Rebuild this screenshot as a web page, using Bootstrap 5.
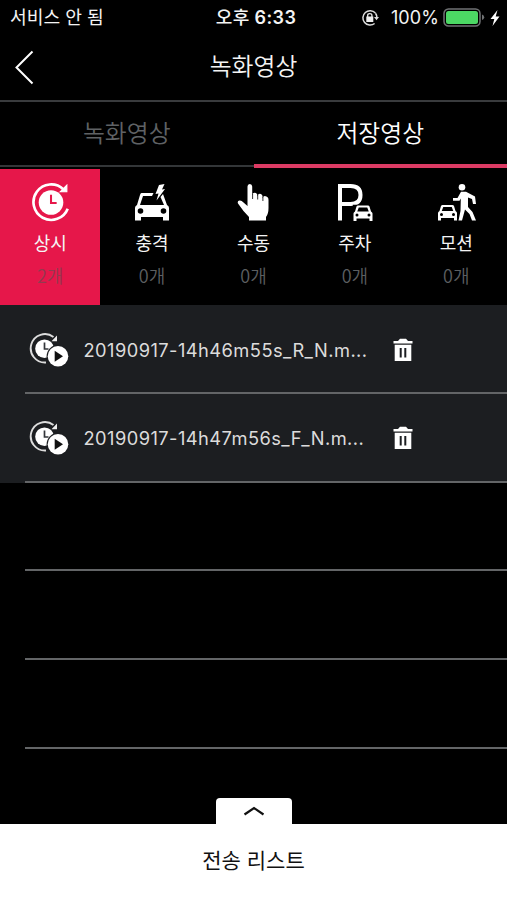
<!DOCTYPE html>
<html lang="ko">
<head>
<meta charset="utf-8">
<meta name="viewport" content="width=device-width, initial-scale=1">
<title>녹화영상</title>
<link href="https://cdn.jsdelivr.net/npm/bootstrap@5.3.0/dist/css/bootstrap.min.css" rel="stylesheet">
<style>
body{background:#000;color:#f4f4f4;font-family:"Inter","Noto Sans CJK KR",sans-serif;height:900px;overflow:hidden}
svg{display:block;flex:none}
.ko{font-family:"Noto Sans CJK KR",sans-serif}
.status-line{height:34px;font-size:18.3px;line-height:34px;padding:0 7px 0 10px;display:grid;grid-template-columns:1fr auto 1fr}
.status-line>div{padding-top:1px}
.carrier{font-size:18.2px;line-height:33px}
.clock-text{font-size:18px;font-weight:600;letter-spacing:.4px;line-height:33px;padding-left:2px}
.clock-text .ko{font-weight:500}
.pct{font-size:18px;letter-spacing:.1px}
.title-bar{height:68px;border-bottom:2px solid #393b3d;display:grid;grid-template-columns:60px 1fr 60px;padding-bottom:1px}
.title-bar h1,.tab-link{font-size:23.8px;font-weight:350;line-height:1}
.title-bar h1{padding-bottom:3px}
.tabs{height:66px}
.tab-link{color:#5f6265;border-bottom:2px solid #333638;padding-bottom:3px;height:65px}
.tab-link.on{color:#fff;border-bottom:4px solid #dc3b64;height:66px;padding-bottom:2px}
.cats{height:136.300px;margin-top:1px;display:grid;grid-template-columns:repeat(5,101.4px)}
.cat{padding-top:12px}
.cat.on{background:#e6174a;margin-right:1px}
.cat-name{font-size:18px;line-height:20px;margin-top:9px}
.cat-count{font-size:18px;line-height:20px;margin-top:13px;color:#5c5f61;font-weight:350}
.cat-count.on{color:#94394f}
.file-row{height:88.7px;position:relative;padding-left:27px}
.file-row.filled{background:#1c1e21}
.file-row::after{content:"";position:absolute;left:25px;right:0;bottom:0;height:2px;background:#636567}
.file-name{font-size:18.3px;line-height:24px;color:#dcdcdc;width:293px;margin-left:14.5px;letter-spacing:.44px;white-space:nowrap}
.sheet{height:76px;background:#fff;color:#111;font-size:21px;position:relative;padding-bottom:4px}
.handle{position:absolute;left:216px;top:-26px;width:76px;height:27px;background:#fff;border-radius:4px 4px 0 0}
</style>
<script src="https://cdn.jsdelivr.net/npm/bootstrap@5.3.0/dist/js/bootstrap.bundle.min.js"></script>
</head>
<body class="d-flex flex-column">
<svg width="0" height="0" class="position-absolute" aria-hidden="true">
<defs>
<symbol id="timer" viewBox="0 0 40 40">
<path d="M32.500 7.500A17.300 17.300 0 1 0 36.800 26.500" fill="none" stroke="#fff" stroke-width="2.600"/>
<path d="M36 3.500V10H29.500Z" fill="#fff" stroke="#fff" stroke-width="1"/>
<circle cx="20.500" cy="20.500" r="12" fill="#fff"/>
</symbol>
<symbol id="car" viewBox="0 0 40 34">
<path fill="#fff" fill-rule="evenodd" d="M10 2H30Q32 2 33 4L36 14Q39 16 39 18V33H33V28H7V33H1V18Q1 16 4 14L7 4Q8 2 10 2ZM11.500 6L8.500 14H31.500L28.500 6ZM8 18A3 3 0 1 0 8 24A3 3 0 1 0 8 18ZM32 18A3 3 0 1 0 32 24A3 3 0 1 0 32 18Z"/>
</symbol>
<symbol id="play" viewBox="0 0 42 36">
<path d="M26.500 5A14.200 14.200 0 1 0 19 30.500" fill="none" stroke="#ddd" stroke-width="1.900"/>
<path d="M30 3.500V9.200H24.500Z" fill="#eee"/>
<circle cx="17.500" cy="16.700" r="9.300" fill="#fff"/>
<path d="M17.500 10.500V17H21.500" fill="none" stroke="#33363a" stroke-width="1.700"/>
<circle cx="31" cy="24.200" r="11.400" fill="#1c1e21"/>
<circle cx="31" cy="24.200" r="10.300" fill="#fff"/>
<path d="M27.700 18.700V29.700L36 24.200Z" fill="#111"/>
</symbol>
<symbol id="trash" viewBox="0 0 20 24">
<path fill="#fff" fill-rule="evenodd" d="M.5 3H5L7 .8H13L15 3H19.500V5.500H.5ZM1.700 6.700H18.300V23H1.700ZM6.700 10V19.500H8.700V10ZM11.300 10V19.500H13.300V10Z"/>
</symbol>
</defs>
</svg>

<div class="status-line">
  <span class="ko carrier">서비스 안 됨</span>
  <span class="clock-text"><span class="ko">오후</span> 6:33</span>
  <div class="d-flex align-items-center justify-content-end">
    <svg class="me-2" width="18" height="18" viewBox="0 0 18 18"><path d="M14.400 4A7.200 7.200 0 1 0 13.600 14.500M14.500 4.200Q15.800 6 15.800 8" fill="none" stroke="#ddd" stroke-width="1.500"/><path d="M13 8H18L15.500 11.200Z" fill="#ddd"/><rect x="5.300" y="7.500" width="7" height="5.500" fill="#eee"/><path d="M6.700 8.500V6.300Q6.700 4.600 8.800 4.600T10.900 6.300V8.500" fill="none" stroke="#eee" stroke-width="1.300"/></svg>
    <span class="pct ms-1 me-1">100%</span>
    <svg width="43" height="20" viewBox="0 0 43 20"><rect x="1" y="1" width="36" height="17" rx="4.500" fill="none" stroke="#707274" stroke-width="1.500"/><rect x="3" y="3" width="32" height="13" rx="2.500" fill="#4cd864"/><path d="M39 6.500Q41.200 7.100 41.200 9.300T39 12.100Z" fill="#707274"/></svg>
    <svg class="ms-1" width="10" height="18" viewBox="0 0 10 18"><path d="M7.500 1L.5 10H4.300L2.500 17L9.500 7.500H5.700Z" fill="#fff"/></svg>
  </div>
</div>

<header class="title-bar align-items-center">
  <svg width="60" height="36" viewBox="0 0 60 36"><path d="M32.500 2.500L16.500 18.500L32.500 34.500" fill="none" stroke="#fff" stroke-width="2"/></svg>
  <h1 class="ko m-0 text-center">녹화영상</h1>
</header>

<nav class="tabs d-flex ko">
  <div class="tab-link w-50 d-flex align-items-center justify-content-center">녹화영상</div>
  <div class="tab-link on w-50 d-flex align-items-center justify-content-center">저장영상</div>
</nav>

<section class="cats ko text-center">
  <div class="cat on d-flex flex-column align-items-center">
    <svg width="41" height="42" viewBox="0 0 40 40"><use href="#timer"/><path d="M20.500 13V21H26" fill="none" stroke="#e6174a" stroke-width="2"/></svg>
    <div class="cat-name">상시</div><div class="cat-count on">2개</div>
  </div>
  <div class="cat d-flex flex-column align-items-center">
    <svg width="40" height="42" viewBox="0 0 40 42"><path fill="#fff" fill-rule="evenodd" d="M9.500 12H21.500L20 15H11L8 24H32L28.500 16L31 13L35 24Q37 25 37 27V39.500H31V36H9V39.500H3V27Q3 25 5 24L8 14Q8.500 12 9.500 12ZM8.500 27.200A2.800 2.800 0 1 0 8.500 32.800A2.800 2.800 0 1 0 8.500 27.200ZM31.500 27.200A2.800 2.800 0 1 0 31.500 32.800A2.800 2.800 0 1 0 31.500 27.200Z"/><path fill="#fff" d="M27 4L32.500 3L30 8.500L33 8L24.500 19.500L26.500 12.500L23.500 13Z"/></svg>
    <div class="cat-name">충격</div><div class="cat-count">0개</div>
  </div>
  <div class="cat d-flex flex-column align-items-center">
    <svg width="40" height="42" viewBox="0 0 40 42"><path fill="#fff" d="M14.500 5.500Q14.500 3 16.800 3T19.200 5.500V14Q20 10.700 23 12Q24.500 12.800 24.500 15Q25.500 11.800 28 13Q29.800 13.700 29.700 17Q30.500 14.500 32.700 15.200Q35.500 15.800 35.500 19V27Q35.500 33 33 36V39.500H16V36L10.500 30L5 22.500Q4 20 6.500 19.500Q8.500 19.200 10.500 21.500L14.500 25Z"/><path d="M19.600 13V18M24.700 14V18.500M29.900 16V20" stroke="#000" stroke-width=".8"/></svg>
    <div class="cat-name">수동</div><div class="cat-count">0개</div>
  </div>
  <div class="cat d-flex flex-column align-items-center">
    <svg width="40" height="42" viewBox="0 0 40 42"><path d="M5 39.500V5H15.500Q25.500 5 25.500 14T15.500 23H5" fill="none" stroke="#fff" stroke-width="4"/><svg x="17.500" y="23.500" width="21" height="17"><rect width="21" height="17" fill="#000"/><use href="#car"/></svg></svg>
    <div class="cat-name">주차</div><div class="cat-count">0개</div>
  </div>
  <div class="cat d-flex flex-column align-items-center">
    <svg width="40" height="42" viewBox="0 0 40 42"><svg x="1" y="23" width="21" height="17"><use href="#car"/></svg><circle cx="26" cy="6.300" r="3.300" fill="#fff"/><path fill="#fff" d="M25 10.800H30L39 15.500L40 23H37L36 18L32 16.500L32 26L36.500 31L40 39.500H36L33.500 33L29 28.500L27.500 34L26 39.500H22.500L24.500 30L24.800 17.500L23.500 19.800H17V17H21.500Z"/></svg>
    <div class="cat-name">모션</div><div class="cat-count">0개</div>
  </div>
</section>

<main>
  <div class="file-row filled d-flex align-items-center">
    <svg width="42" height="36"><use href="#play"/></svg><span class="file-name">20190917-14h46m55s_R_N.m...</span>
    <svg class="ms-3" width="20" height="24"><use href="#trash"/></svg>
  </div>
  <div class="file-row filled d-flex align-items-center">
    <svg width="42" height="36"><use href="#play"/></svg><span class="file-name">20190917-14h47m56s_F_N.m...</span>
    <svg class="ms-3" width="20" height="24"><use href="#trash"/></svg>
  </div>
  <div class="file-row"></div>
  <div class="file-row"></div>
  <div class="file-row"></div>
</main>

<footer class="sheet ko mt-auto d-flex align-items-center justify-content-center">
  <div class="handle d-flex justify-content-center"><svg width="24" height="26" viewBox="0 0 24 26"><path d="M2.500 16.500L12 10L21.500 16.500" fill="none" stroke="#111" stroke-width="2.200"/></svg></div>
  <span>전송 리스트</span>
</footer>
</body>
</html>
